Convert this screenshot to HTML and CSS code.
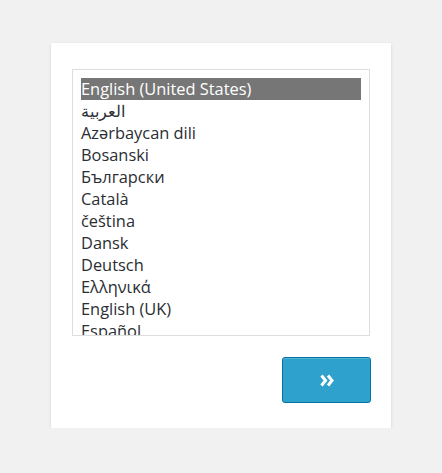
FILE: index.html
```html
<!DOCTYPE html>
<html lang="en">
<head>
    <meta charset="UTF-8">
    <title>WordPress &rsaquo; Installation</title>
    <link rel="stylesheet" href="styles.css">
</head>
<body>
    <div class="wp-box">
        <!-- language list -->
        <div class="lang-list">
            <div class="lang-item selected">English (United States)</div>
            <div class="lang-item" lang="ar">العربية</div>
            <div class="lang-item">Azərbaycan dili</div>
            <div class="lang-item">Bosanski</div>
            <div class="lang-item">Български</div>
            <div class="lang-item">Català</div>
            <div class="lang-item">čeština</div>
            <div class="lang-item">Dansk</div>
            <div class="lang-item">Deutsch</div>
            <div class="lang-item">Ελληνικά</div>
            <div class="lang-item">English (UK)</div>
            <div class="lang-item">Español</div>
        </div>

        <div class="step">
            <button class="button-next" type="button" aria-label="Continue">
                <svg width="14" height="13" viewBox="0 0 14 13">
                    <polyline points="1.5,1.5 5.5,6.5 1.5,11.5" fill="none" stroke="#fff" stroke-width="3" />
                    <polyline points="8,1.5 12,6.5 8,11.5" fill="none" stroke="#fff" stroke-width="3" />
                </svg>
            </button>
        </div>
    </div>
</body>
</html>
```

FILE: styles.css
```css
body {
    margin: 0;
    padding-top: 43px;
    background: #f1f1f1;
    font-family: "Open Sans", sans-serif;
    color: #2a2e33;
}
.wp-box {
    width: 340px;
    margin: 0 auto;
    padding: 26px 21px 25px;
    box-sizing: border-box;
    background: #fff;
    box-shadow: 0 1px 3px rgba(0, 0, 0, 0.13);
}
.lang-list {
    height: 267px;
    box-sizing: border-box;
    border: 1px solid #ddd;
    padding: 8px;
    overflow: hidden;
}
.lang-item {
    height: 22px;
    line-height: 22px;
    font-size: 16.4px;
    white-space: nowrap;
}
.lang-item.selected {
    background: #767676;
    color: #fff;
}
.step {
    display: flex;
    justify-content: flex-end;
    margin-top: 21px;
    margin-right: -1px;
}
.button-next {
    width: 89px;
    height: 46px;
    display: flex;
    align-items: center;
    justify-content: center;
    background: #2ea2cc;
    border: 1px solid #0074a2;
    border-radius: 3px;
    box-shadow: inset 0 1px 0 rgba(120, 200, 230, 0.5);
    padding: 0;
    cursor: pointer;
}
```
